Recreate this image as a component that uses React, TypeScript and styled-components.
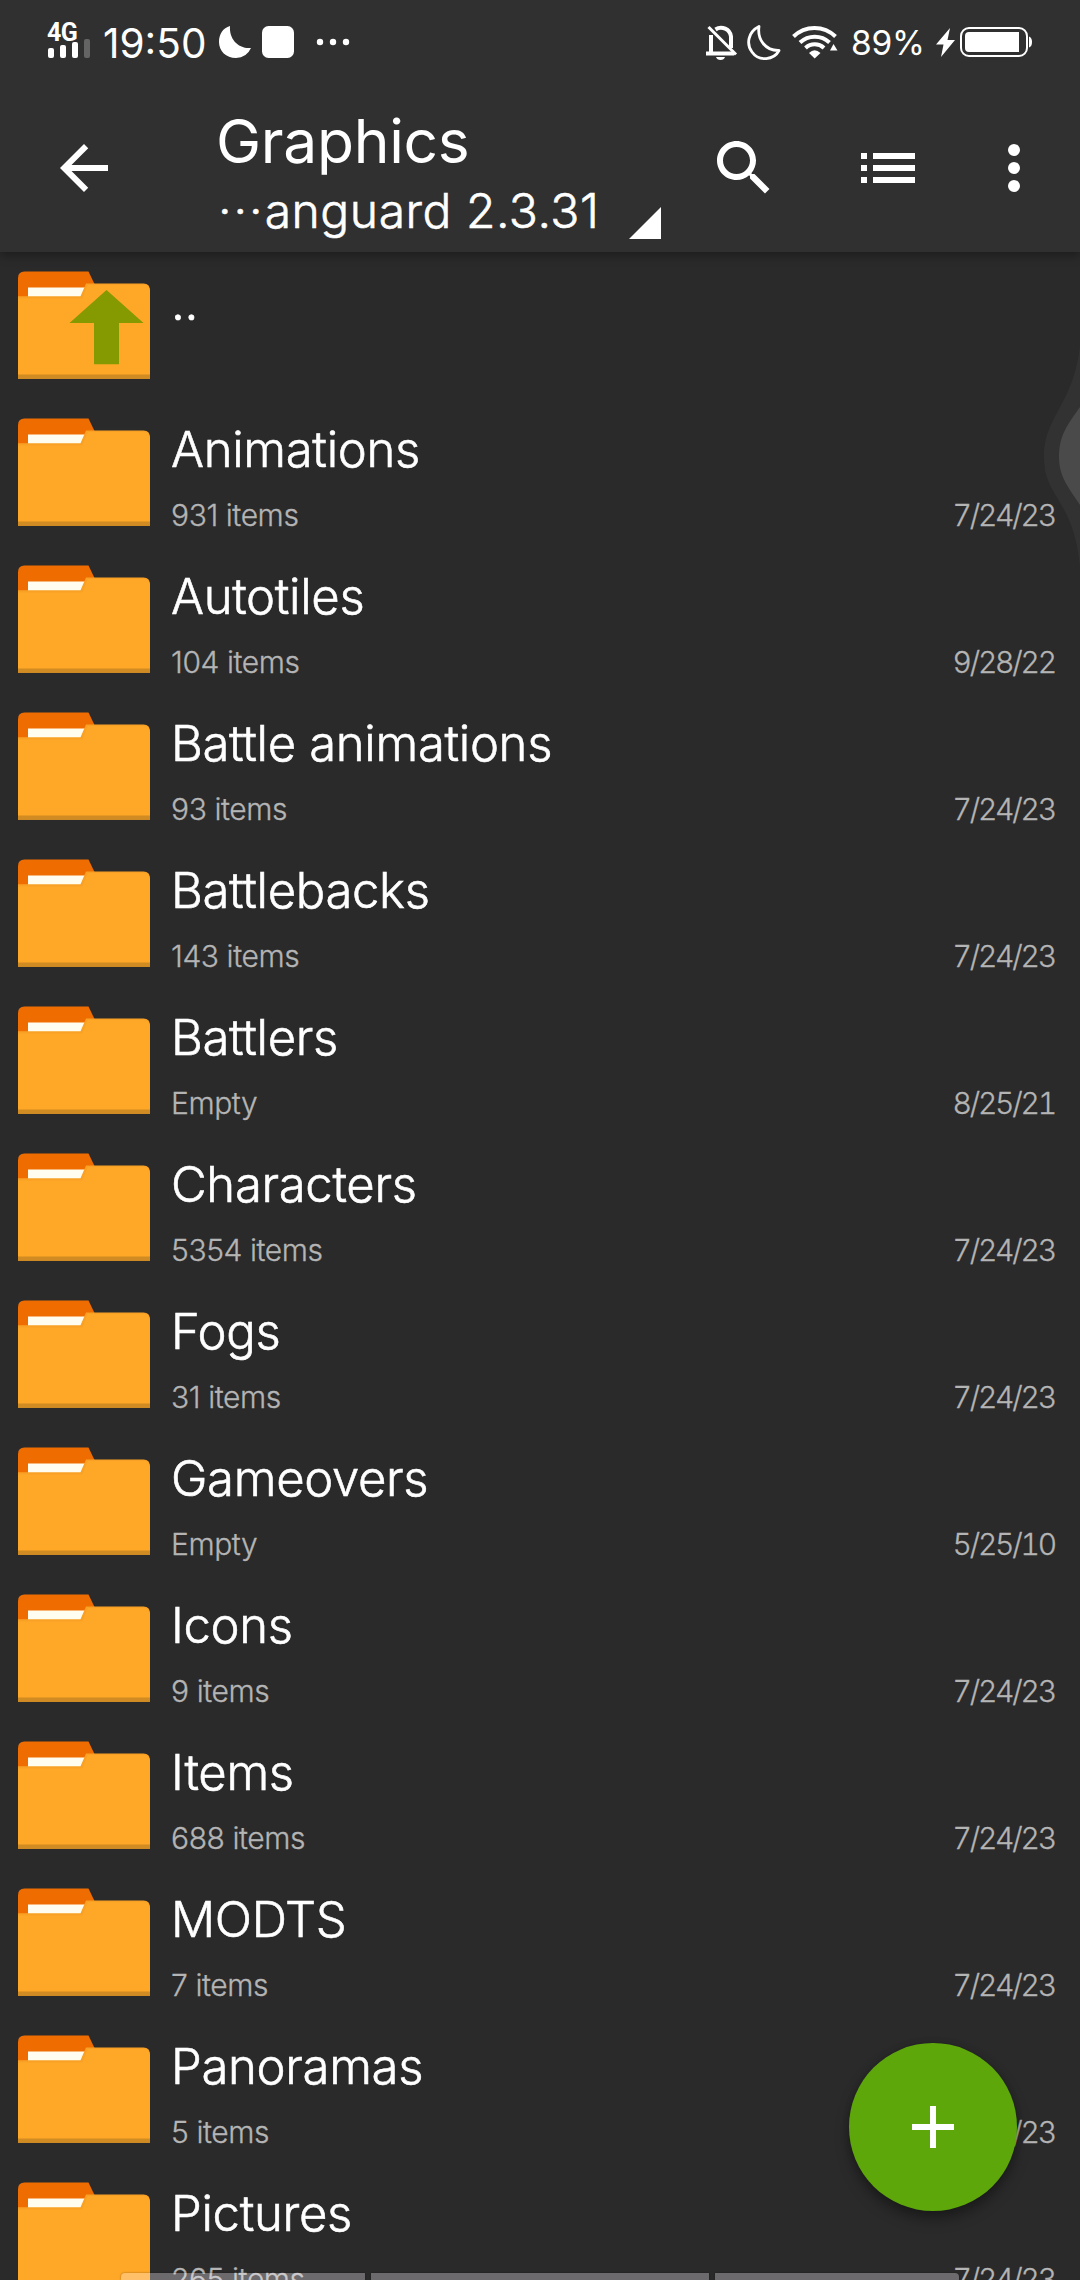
import React from "react";
import styled, { createGlobalStyle } from "styled-components";

const GlobalStyle = createGlobalStyle`
  *, *::before, *::after { box-sizing: border-box; }
  html, body { margin: 0; padding: 0; background: #2a2a2a; }
  body { font-family: Inter, Roboto, "Noto Sans", sans-serif; overflow: hidden; }
`;

const Screen = styled.div`
  position: relative;
  width: 1080px;
  height: 2280px;
  overflow: hidden;
  display: flex;
  flex-direction: column;
  background: #2a2a2a;
  color: #fff;
`;

const Header = styled.header`
  flex: none;
  height: 252px;
  background: #303030;
  box-shadow: 0 3px 10px rgba(0, 0, 0, 0.35);
  z-index: 1;
`;

const StatusBar = styled.div`
  height: 90px;
  display: flex;
  justify-content: space-between;
  padding: 0 47px 0 48px;
`;

const StatusGroup = styled.div`
  display: flex;
  align-items: flex-start;
`;

const Glyph = styled.svg<{ $top?: number; $left?: number }>`
  display: block;
  flex: none;
  margin-top: ${(p) => p.$top ?? 0}px;
  margin-left: ${(p) => p.$left ?? 0}px;
`;

const Signal = styled.div`
  width: 42px;
  padding-top: 22px;
`;

const Network = styled.div`
  font: 700 25px/20px Roboto, sans-serif;
  letter-spacing: -0.6px;
  height: 20px;
  margin-left: -1px;
  padding-top: 1px;
`;

const Clock = styled.div`
  width: 106px;
  margin-left: 13px;
  font-size: 40.5px;
  line-height: 48px;
  padding-top: 20px;
  white-space: nowrap;
`;

const Percent = styled.div`
  width: 85px;
  margin-left: 13px;
  font-size: 33.5px;
  line-height: 40px;
  padding-top: 23px;
  letter-spacing: -0.2px;
  white-space: nowrap;
`;

const Toolbar = styled.div`
  height: 162px;
  display: flex;
  align-items: flex-start;
  padding: 0 30px 0 48px;
`;

const PathPicker = styled.div`
  flex: 1;
  margin-left: 96px;
  padding-top: 16px;
`;

const Title = styled.h1`
  margin: 0;
  font-size: 60.5px;
  font-weight: 400;
  line-height: 70px;
  letter-spacing: -0.3px;
`;

const SubRow = styled.div`
  display: flex;
  align-items: flex-start;
  margin-top: 5px;
`;

const Subtitle = styled.div`
  width: 412px;
  font-size: 48px;
  font-weight: 300;
  line-height: 60px;
  letter-spacing: 0.55px;
  white-space: nowrap;
  -webkit-text-stroke: 0.6px currentColor;
`;

const Ellipsis = styled.span`
  margin-left: 2px;
  letter-spacing: 2px;
`;

const List = styled.main`
  flex: 1;
  min-height: 0;
  overflow: hidden;
`;

const Row = styled.div`
  height: 147px;
  display: flex;
  padding: 19px 25px 0 18px;
`;

const Info = styled.div`
  flex: 1;
  margin-left: 21px;
  padding-top: 2px;
`;

const Name = styled.div`
  font-size: 49px;
  font-weight: 300;
  line-height: 60px;
  letter-spacing: -0.32px;
  white-space: nowrap;
  -webkit-text-stroke: 0.6px currentColor;
`;

const Meta = styled.div`
  display: flex;
  justify-content: space-between;
  margin-top: 17px;
  font-size: 30px;
  font-weight: 300;
  line-height: 36px;
  color: #b4b4b4;
  -webkit-text-stroke: 0.3px currentColor;
`;

const Count = styled.span`
  letter-spacing: -0.42px;
`;

const DateText = styled.span`
  font-variant-numeric: tabular-nums;
  letter-spacing: -2.2px;
`;

const Fab = styled.button`
  position: absolute;
  left: 849px;
  top: 2043px;
  width: 168px;
  height: 168px;
  border: 0;
  border-radius: 50%;
  padding: 0;
  display: grid;
  place-items: center;
  background: #5da70b;
  box-shadow: 0 8px 14px rgba(0, 0, 0, 0.35), 0 0 6px rgba(0, 0, 0, 0.15);
  z-index: 2;
`;

const EdgeHandle = styled.svg`
  position: absolute;
  right: 0;
  top: 340px;
`;

const GestureBars = styled.div`
  position: absolute;
  left: 121px;
  bottom: 0;
  display: flex;
  gap: 6px;
  z-index: 3;
`;

const GestureBar = styled.div<{ $w: number; $round?: string }>`
  width: ${(p) => p.$w}px;
  height: 7px;
  border-radius: ${(p) => p.$round ?? "0"};
  background: rgba(255, 250, 255, 0.31);
  box-shadow: 0 0 2px rgba(0, 0, 0, 0.4);
`;

function Folder({ up }: { up?: boolean }) {
  return (
    <Glyph width="132" height="109" viewBox="0 0 132 109">
      <path d="M0 30V7Q0 .5 6.5 .5H70.5L77 14V30Z" fill="#ef6c00" />
      <path d="M10 16.6H68L64 26H10Z" fill="#fffdf0" />
      <path d="M0 25.2H62.5L68 12.6H125.5Q132 12.8 132 19.5V107.6H0Z" fill="#f9a125" />
      <path d="M0 27.5H64.3L69.8 14H125.5Q132 14.5 132 20V107.6H0Z" fill="#ffa726" />
      <path d="M0 103.4H132V107.6H0Z" fill="#d08c22" />
      {up && <path d="M88.5 19 125.5 52H101V93.3H76V52H51.5Z" fill="#859900" />}
    </Glyph>
  );
}

const folders: { name: string; count: string; date: string }[] = [
  { name: "Animations", count: "931 items", date: "7/24/23" },
  { name: "Autotiles", count: "104 items", date: "9/28/22" },
  { name: "Battle animations", count: "93 items", date: "7/24/23" },
  { name: "Battlebacks", count: "143 items", date: "7/24/23" },
  { name: "Battlers", count: "Empty", date: "8/25/21" },
  { name: "Characters", count: "5354 items", date: "7/24/23" },
  { name: "Fogs", count: "31 items", date: "7/24/23" },
  { name: "Gameovers", count: "Empty", date: "5/25/10" },
  { name: "Icons", count: "9 items", date: "7/24/23" },
  { name: "Items", count: "688 items", date: "7/24/23" },
  { name: "MODTS", count: "7 items", date: "7/24/23" },
  { name: "Panoramas", count: "5 items", date: "7/24/23" },
  { name: "Pictures", count: "265 items", date: "7/24/23" },
];

export default function App() {
  return (
    <Screen>
      <GlobalStyle />
      <Header>
        <StatusBar>
          <StatusGroup>
            <Signal>
              <Network>4G</Network>
              <Glyph width="42" height="20" viewBox="0 0 42 20" $top={-3} fill="#fff">
                <rect x="0" y="9" width="6" height="10" rx="2" />
                <rect x="12" y="6" width="6" height="13" rx="2" />
                <rect x="24" y="3" width="6" height="16" rx="2" />
                <rect x="36" y="0" width="6" height="19" rx="2" opacity=".25" />
              </Glyph>
            </Signal>
            <Clock>19:50</Clock>
            <Glyph width="32" height="32" viewBox="0 0 32 32" $top={26} $left={10}>
              <path d="M11 0C10 13 19 23 32 22A17 17 0 0 1 17 32C7 32 0 25 0 16C0 8 4 2 11 0Z" fill="#fff" />
            </Glyph>
            <Glyph width="32" height="32" viewBox="0 0 32 32" $top={26} $left={11}>
              <rect width="32" height="32" rx="6.5" fill="#fff" />
            </Glyph>
            <Glyph width="34" height="8" viewBox="0 0 34 8" $top={38} $left={22} fill="#fff">
              <circle cx="4" cy="4" r="3.2" />
              <circle cx="17" cy="4" r="3.2" />
              <circle cx="30" cy="4" r="3.2" />
            </Glyph>
          </StatusGroup>
          <StatusGroup>
            <Glyph width="32" height="37" viewBox="0 0 32 37" $top={24} fill="none" stroke="#fff">
              <path d="M5 29V11M9.500 5.500A10 10 0 0 1 25 12.500V24" strokeWidth="4" />
              <path d="M0 29.500H28" strokeWidth="4" />
              <path d="M2.500 3 30 30.500" strokeWidth="3" />
              <path d="M10 33H19Q18 36 14.500 36T10 33Z" fill="#fff" stroke="none" />
            </Glyph>
            <Glyph width="34" height="37" viewBox="0 0 34 37" $top={24} $left={9} fill="none" stroke="#fff" strokeWidth="2.800" strokeLinejoin="round">
              <path d="M12 2.500C1 8 -1 20 5 28C12 38 27 36 32 26.500C19 27 10 16 12 2.500Z" />
            </Glyph>
            <Glyph width="46" height="34" viewBox="0 0 46 34" $top={25} $left={11} fill="none" stroke="#fff" strokeWidth="4">
              <path d="M1.500 11.500A30 30 0 0 1 43.500 11.500" />
              <path d="M8 17.500A21.500 21.500 0 0 1 37.500 17.500" />
              <path d="M13.500 23A13.500 13.500 0 0 1 32 23" />
              <path d="M17 28Q22.500 22.500 28.500 28L22.700 33.500Z" fill="#fff" stroke="none" />
              <path d="M38 25.500 41.500 19 45.500 25.500Z" fill="#fff" stroke="none" />
            </Glyph>
            <Percent>89%</Percent>
            <Glyph width="20" height="31" viewBox="0 0 20 31" $top={27} $left={0}>
              <path d="M14 1 0 17.500H7.500L5 30 19 13H11.500Z" fill="#fff" />
            </Glyph>
            <Glyph width="73" height="30" viewBox="0 0 73 30" $top={27} $left={4} fill="#fff">
              <rect x="1" y="1" width="66" height="28" rx="8" fill="none" stroke="#fff" strokeWidth="2" />
              <path d="M59 5V25H9Q5 25 5 21V9Q5 5 9 5Z" />
              <path d="M69 9.500Q72 10.500 72 15T69 20.500Z" />
            </Glyph>
          </StatusGroup>
        </StatusBar>
        <Toolbar>
          <Glyph width="72" height="72" viewBox="0 0 24 24" $top={42} fill="#fff">
            <path d="M20 11H7.830l5.590-5.590L12 4l-8 8 8 8 1.410-1.410L7.830 13H20v-2z" />
          </Glyph>
          <PathPicker>
            <Title>Graphics</Title>
            <SubRow>
              <Subtitle>
                <Ellipsis>···</Ellipsis>anguard 2.3.31
              </Subtitle>
              <Glyph width="34" height="34" viewBox="0 0 34 34" $top={25}>
                <path d="M33 1V33H1Z" fill="#fff" />
              </Glyph>
            </SubRow>
          </PathPicker>
          <Glyph width="72" height="72" viewBox="0 0 24 24" $top={42} fill="#fff">
            <path d="M15.500 14h-.790l-.280-.270C15.410 12.590 16 11.110 16 9.500 16 5.910 13.090 3 9.500 3S3 5.910 3 9.500 5.910 16 9.500 16c1.610 0 3.090-.590 4.230-1.570l.270.280v.790l5 4.990L20.490 19l-4.990-5zm-6 0C7.010 14 5 11.990 5 9.500S7.010 5 9.500 5 14 7.010 14 9.500 11.990 14 9.500 14z" />
          </Glyph>
          <Glyph width="72" height="72" viewBox="0 0 24 24" $top={42} $left={72} fill="#fff">
            <path d="M3 7h2v2H3zM3 11h2v2H3zM3 15h2v2H3zM7 7h14v2H7zM7 11h14v2H7zM7 15h14v2H7z" />
          </Glyph>
          <Glyph width="72" height="72" viewBox="0 0 24 24" $top={42} $left={54} fill="#fff">
            <circle cx="12" cy="6" r="2" />
            <circle cx="12" cy="12" r="2" />
            <circle cx="12" cy="18" r="2" />
          </Glyph>
        </Toolbar>
      </Header>

      <List>
        <Row>
          <Folder up />
          <Info>
            <Name>..</Name>
          </Info>
        </Row>
        {folders.map((f) => (
          <Row key={f.name}>
            <Folder />
            <Info>
              <Name>{f.name}</Name>
              <Meta>
                <Count>{f.count}</Count>
                <DateText>{f.date}</DateText>
              </Meta>
            </Info>
          </Row>
        ))}
      </List>

      <EdgeHandle width="36" height="232" viewBox="0 0 36 232">
        <path d="M36 6C29 66 0 76 0 117C0 158 29 158 36 226Z" fill="#323232" />
        <path d="M36 67C24 84 15 95 15 117C15 138 26 149 36 165Z" fill="#4a4a4a" />
      </EdgeHandle>

      <Fab aria-label="Add">
        <svg width="42" height="42" viewBox="0 0 42 42">
          <path d="M18 0H24V18H42V24H24V42H18V24H0V18H18Z" fill="#fff" />
        </svg>
      </Fab>

      <GestureBars>
        <GestureBar $w={244} $round="4px 0 0 0" />
        <GestureBar $w={338} />
        <GestureBar $w={244} $round="0 4px 0 0" />
      </GestureBars>
    </Screen>
  );
}
